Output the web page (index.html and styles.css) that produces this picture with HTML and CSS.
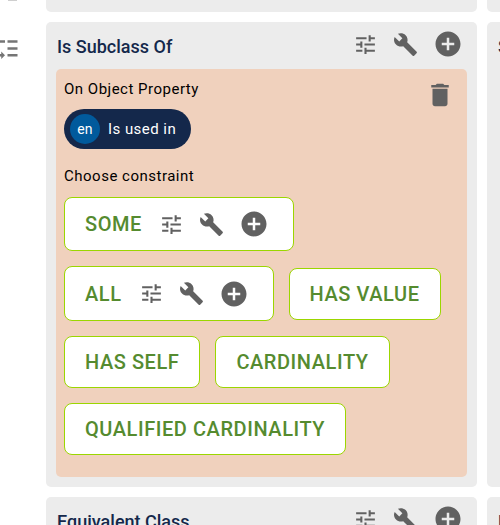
FILE: index.html
```html
<!DOCTYPE html>
<html lang="en">
<head>
    <meta charset="UTF-8">
    <title>Class editor</title>
    <link rel="stylesheet" href="styles.css">
</head>
<body>
    <svg width="0" height="0" class="icon-defs">
        <symbol id="i-tune" viewBox="0 0 24 24"><path d="M3 17v2h6v-2H3zM3 5v2h10V5H3zm10 16v-2h8v-2h-8v-2h-2v6h2zM7 9v2H3v2h4v2h2V9H7zm14 4v-2H11v2h10zm-6-4h2V7h4V5h-4V3h-2v6z"/></symbol>
        <symbol id="i-build" viewBox="0 0 24 24"><path d="M22.7 19l-9.1-9.1c.9-2.3.4-5-1.5-6.9-2-2-5-2.4-7.4-1.3L9 6 6 9 1.6 4.7C.4 7.1.9 10.1 2.9 12.1c1.9 1.9 4.6 2.4 6.9 1.5l9.1 9.1c.4.4 1 .4 1.4 0l2.3-2.3c.5-.4.5-1.1.1-1.4z"/></symbol>
        <symbol id="i-add" viewBox="0 0 24 24"><path d="M12 2C6.48 2 2 6.48 2 12s4.48 10 10 10 10-4.48 10-10S17.52 2 12 2zm5 11h-4v4h-2v-4H7v-2h4V7h2v4h4v2z"/></symbol>
        <symbol id="i-delete" viewBox="0 0 24 24"><path d="M6 19c0 1.1.9 2 2 2h8c1.1 0 2-.9 2-2V7H6v12zM19 4h-3.5l-1-1h-5l-1 1H5v2h14V4z"/></symbol>
        <symbol id="i-priority" viewBox="0 0 24 24"><path d="M14 5h8v2h-8zm0 5.5h8v2h-8zm0 5.5h8v2h-8zM2 11.5C2 15.08 4.92 18 8.5 18H9v2l3-3-3-3v2h-.5C6.02 16 4 13.98 4 11.5S6.02 7 8.5 7H12V5H8.5C4.92 5 2 7.92 2 11.5z"/></symbol>
    </svg>

    <div class="layout">
        <aside class="side">
            <div class="side-stub"></div>
            <svg class="side-icon"><use href="#i-priority"/></svg>
        </aside>

        <section class="card card-stub"></section>
        <section class="card card-stub"></section>

        <section class="card">
            <div class="card-head">
                <h2 class="card-title">Is Subclass Of</h2>
                <div class="tools">
                    <svg class="icon"><use href="#i-tune"/></svg>
                    <svg class="icon"><use href="#i-build"/></svg>
                    <svg class="icon icon-add"><use href="#i-add"/></svg>
                </div>
            </div>

            <div class="panel">
                <svg class="icon-delete"><use href="#i-delete"/></svg>
                <p class="panel-label">On Object Property</p>
                <div class="chip"><span class="chip-lang">en</span>Is used in</div>
                <p class="panel-label label-choose">Choose constraint</p>
                <div class="options">
                    <div class="option option-tools">SOME
                        <div class="tools">
                            <svg class="icon"><use href="#i-tune"/></svg>
                            <svg class="icon"><use href="#i-build"/></svg>
                            <svg class="icon icon-add"><use href="#i-add"/></svg>
                        </div>
                    </div>
                    <div class="option option-tools option-tall">ALL
                        <div class="tools">
                            <svg class="icon"><use href="#i-tune"/></svg>
                            <svg class="icon"><use href="#i-build"/></svg>
                            <svg class="icon icon-add"><use href="#i-add"/></svg>
                        </div>
                    </div>
                    <div class="option">HAS VALUE</div>
                    <div class="option">HAS SELF</div>
                    <div class="option">CARDINALITY</div>
                    <div class="option">QUALIFIED CARDINALITY</div>
                </div>
            </div>
        </section>

        <section class="card">
            <div class="card-head">
                <h2 class="card-title">Subclasses</h2>
            </div>
        </section>

        <section class="card">
            <div class="card-head">
                <h2 class="card-title">Equivalent Class</h2>
                <div class="tools">
                    <svg class="icon"><use href="#i-tune"/></svg>
                    <svg class="icon"><use href="#i-build"/></svg>
                    <svg class="icon icon-add"><use href="#i-add"/></svg>
                </div>
            </div>
        </section>

        <section class="card">
            <div class="card-head">
                <h2 class="card-title">Disjoint With</h2>
            </div>
        </section>
    </div>
</body>
</html>
```

FILE: styles.css
```css
:root {
    --card: #ececec;
    --panel: #f0d1bd;
    --navy: #14284b;
    --icon: #616161;
    --green: #558b2f;
    --lime: #9bd600;
}

* {
    box-sizing: border-box;
}

html, body {
    height: 100%;
}

body {
    margin: 0;
    overflow: hidden;
    font-family: Roboto, sans-serif;
    color: #000;
    background: #fff;
}

.icon-defs {
    position: absolute;
}

.layout {
    display: grid;
    grid-template-columns: 431px 300px;
    gap: 10px;
    width: 777px;
    margin-top: -60px;
    padding-left: 46px;
}

.side {
    position: absolute;
    top: 0;
    left: -10px;
    width: 46px;
}

.side-stub {
    width: 9px;
    height: 1px;
    margin-left: 18px;
    background: #cfcfcf;
}

.side-icon {
    display: block;
    width: 30px;
    height: 30px;
    margin-top: 33px;
    fill: #757575;
}

.card {
    background: var(--card);
    border-radius: 5px;
    padding: 0 10px 10px;
}

.card-stub {
    height: 72px;
}

.card-head {
    display: flex;
    align-items: flex-start;
    justify-content: space-between;
    height: 47px;
}

.card-title {
    margin: 0;
    padding-left: 1px;
    font-size: 18px;
    line-height: 49px;
    font-weight: 500;
    color: var(--navy);
}

.tools {
    display: flex;
    align-items: center;
    gap: 15px;
}

.icon {
    display: block;
    width: 25px;
    height: 25px;
    fill: var(--icon);
}

.icon-add {
    width: 30px;
    height: 30px;
}

.card-head .tools {
    margin-right: 4px;
    padding-top: 7px;
}

.panel {
    position: relative;
    background: var(--panel);
    border-radius: 5px;
    padding: 11px 8px 22px;
}

.icon-delete {
    position: absolute;
    top: 11px;
    right: 12px;
    width: 30px;
    height: 30px;
    fill: var(--icon);
}

.panel-label {
    margin: 0;
    font-size: 15px;
    line-height: 18px;
    letter-spacing: 0.5px;
}

.label-choose {
    margin-top: 18px;
}

.chip {
    display: flex;
    width: fit-content;
    align-items: center;
    gap: 8px;
    height: 40px;
    margin-top: 11px;
    padding: 0 15px 0 6px;
    border-radius: 20px;
    background: var(--navy);
    color: #fff;
    font-size: 15px;
    letter-spacing: 0.45px;
}

.chip-lang {
    display: flex;
    align-items: center;
    justify-content: center;
    width: 30px;
    height: 30px;
    border-radius: 50%;
    background: #015a9c;
    font-size: 14px;
    letter-spacing: 0.25px;
}

.options {
    display: flex;
    flex-wrap: wrap;
    align-items: center;
    gap: 15px;
    margin-top: 12px;
}

.option {
    display: flex;
    align-items: center;
    height: 52px;
    padding: 0 20px;
    background: #fff;
    border: 1px solid var(--lime);
    border-radius: 8px;
    color: var(--green);
    font-size: 20px;
    font-weight: 500;
    letter-spacing: 0.56px;
}

.option-tools {
    height: 54px;
}

.option-tall {
    height: 55px;
}

.option .tools {
    margin-left: 17px;
    margin-right: 4px;
}
```
